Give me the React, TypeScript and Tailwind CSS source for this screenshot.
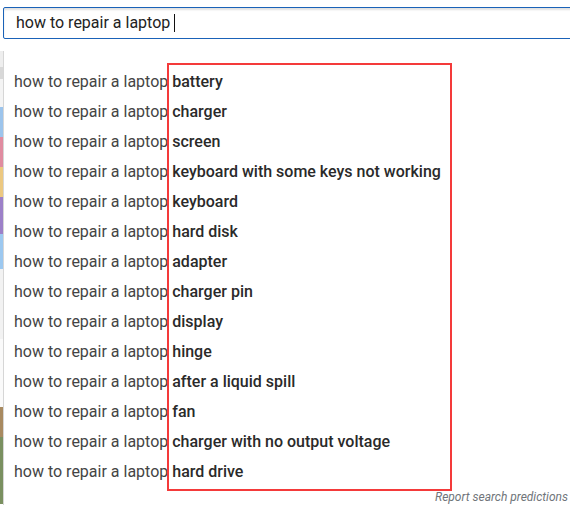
import React from 'react';

const PREFIX = 'how to repair a laptop';
const SUFFIXES = [
  'battery',
  'charger',
  'screen',
  'keyboard with some keys not working',
  'keyboard',
  'hard disk',
  'adapter',
  'charger pin',
  'display',
  'hinge',
  'after a liquid spill',
  'fan',
  'charger with no output voltage',
  'hard drive',
];

// strip of the page behind the dropdown, peeking out on the left
function BackdropStrip() {
  return (
    <div className="w-[3px] flex flex-col">
      <div className="h-[16px] bg-[#eeeeee]" />
      <div className="h-[12px] bg-[#d8d8d8]" />
      <div className="h-[28px] bg-[#f4f4f4]" />
      <div className="h-[30px] bg-[#9cc4ec]" />
      <div className="h-[30px] bg-[#e08ca0]" />
      <div className="h-[30px] bg-[#ecc880]" />
      <div className="h-[37px] bg-[#9c80c8]" />
      <div className="h-[35px] bg-[#9cc8f0]" />
      <div className="h-[70px] bg-[#f2f2f2]" />
      <div className="h-[68px] bg-[#fafafa]" />
      <div className="h-[30px] bg-[#a88a60]" />
      <div className="h-[67px] bg-[#7a9060]" />
    </div>
  );
}

export default function App() {
  return (
    <div
      className="relative w-[570px] h-[505px] overflow-hidden bg-white"
      style={{ fontFamily: 'Roboto, "Liberation Sans", sans-serif' }}
    >
      {/* search box */}
      <div className="pt-[7px] pl-[3px]">
        <div className="h-[32px] w-[600px] border border-[#1a62b8] rounded-[2px] shadow-[inset_0_2px_2px_rgba(0,0,0,0.12)] flex items-center pl-[12px]">
          <span className="text-[16px] text-[#222]">{PREFIX}</span>
          <span className="ml-[4px] w-px h-[18px] bg-[#111]" />
        </div>
      </div>

      <div className="flex mt-[12px]">
        <BackdropStrip />
        <div className="flex-1 border-l border-[#d6d6d6] bg-white pt-[16px]">
          <ul>
            {SUFFIXES.map((s) => (
              <li key={s} className="h-[30px] flex items-center pl-[10px] text-[16px] whitespace-pre">
                <span className="text-[#444]">{PREFIX} </span>
                <span className="font-medium text-[#2a2a2a]">{s}</span>
              </li>
            ))}
          </ul>
          <div className="flex justify-end pr-[2px] pt-[1px]">
            <span className="italic text-[12px] text-[#70757a]">Report search predictions</span>
          </div>
        </div>
      </div>

      {/* annotation box */}
      <div className="absolute left-[167px] top-[63px] w-[285px] h-[428px] border-2 border-[#f43a3a]" />
    </div>
  );
}
